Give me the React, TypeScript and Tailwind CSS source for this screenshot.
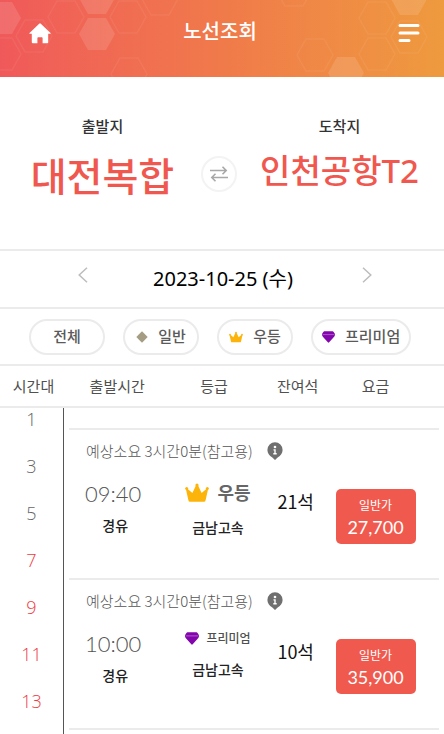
import React from "react";

type Grade = "deluxe" | "premium";

interface Bus {
  time: string;
  grade: Grade;
  company: string;
  seats: string;
  price: string;
}

const buses: Bus[] = [
  { time: "09:40", grade: "deluxe", company: "금남고속", seats: "21석", price: "27,700" },
  { time: "10:00", grade: "premium", company: "금남고속", seats: "10석", price: "35,900" },
];

const hours = [1, 3, 5, 7, 9, 11, 13];

function Crown({ className }: { className: string }) {
  return (
    <svg viewBox="0 0 24 19" className={className} fill="#fdb40a" aria-hidden="true">
      <path d="M3.400 17.200 1 6.500l1.400-.7 5 4.200L10.900 2.500h2.200L16.600 10l5-4.200 1.400.7-2.400 10.700q-.3 1.500-1.600 1.500H5q-1.300 0-1.600-1.500Z" />
      <circle cx="12" cy="2" r="1.600" />
      <circle cx="1.700" cy="5.600" r="1.500" />
      <circle cx="22.300" cy="5.600" r="1.500" />
    </svg>
  );
}

function Gem({ className }: { className: string }) {
  return (
    <svg viewBox="0 0 14 13" className={className} aria-hidden="true">
      <path d="M2.400.3h9.200q.5 0 .8.400L13.700 2.800q.5.900.200 1.900-.2.800-.8 1.500L7.700 12.300q-.7.700-1.400 0L.9 6.200Q.3 5.500.1 4.700-.2 3.700.3 2.800L1.600.7q.3-.4.8-.4Z" fill="#8206ac" />
      <path d="M.6 3.900h12.800" stroke="#b765d4" strokeWidth=".9" />
    </svg>
  );
}

function InfoPin() {
  return (
    <svg viewBox="0 0 16 18" className="h-[18px] w-4" aria-hidden="true">
      <path d="M8 .3a7.600 7.600 0 0 0-7.600 7.600c0 3.400 2.100 5.700 4.600 7.300.9.600 1.500 1.200 2.100 2.100q.9 1 1.800 0c.6-.9 1.200-1.500 2.100-2.100 2.500-1.600 4.600-3.900 4.600-7.300A7.600 7.600 0 0 0 8 .3Z" fill="#6f6f6f" />
      <circle cx="8" cy="5" r="1.300" fill="#fff" />
      <path d="M6.500 7.900H8v3.600M6.300 11.800h3.400" stroke="#fff" strokeWidth="1.400" fill="none" />
    </svg>
  );
}

function Honeycomb() {
  const hex = "M-18 0-9-16H9L18 0 9 16H-9Z";
  return (
    <svg
      viewBox="0 0 444 77"
      preserveAspectRatio="xMidYMid slice"
      className="absolute inset-0 h-full w-full"
      aria-hidden="true"
    >
      <g fill="#fff" fillOpacity=".12">
        <path d={hex} transform="translate(3 18)" />
        <path d={hex} transform="translate(97 34)" />
        <path d={hex} transform="translate(97 -2)" />
        <path d={hex} transform="translate(346 73)" />
        <path d={hex} transform="translate(409 -1)" />
      </g>
      <g fill="none" stroke="#fff" strokeOpacity=".06" strokeWidth="1.500">
        <path d={hex} transform="translate(3 54)" />
        <path d={hex} transform="translate(34 36)" />
        <path d={hex} transform="translate(66 17)" />
        <path d={hex} transform="translate(128 17)" />
        <path d={hex} transform="translate(160 -1)" />
        <path d={hex} transform="translate(129 74)" />
        <path d={hex} transform="translate(294 -10)" />
        <path d={hex} transform="translate(315 55)" />
        <path d={hex} transform="translate(377 18)" />
        <path d={hex} transform="translate(377 54)" />
        <path d={hex} transform="translate(409 37)" />
      </g>
    </svg>
  );
}

function Station({ label, name, size }: { label: string; name: string; size: string }) {
  return (
    <div className="flex flex-col items-center pl-1">
      <span className="text-[15px] leading-6 font-medium text-[#333]">{label}</span>
      <button type="button" className={`mt-3 whitespace-nowrap font-medium text-[#f0584f] ${size}`}>
        {name}
      </button>
    </div>
  );
}

function Chip({ label, icon }: { label: string; icon?: React.ReactNode }) {
  return (
    <button
      type="button"
      className="flex h-9 min-w-[76px] items-center justify-center gap-[10px] rounded-full border-2 border-[#ebebeb] px-[9px] text-[15px] font-medium whitespace-nowrap text-[#5a5a5a]"
    >
      {icon}
      {label}
    </button>
  );
}

function GradeLabel({ grade }: { grade: Grade }) {
  return grade === "deluxe" ? (
    <div className="flex h-9 items-center justify-center gap-2 text-[18px] font-bold text-[#666]">
      <Crown className="h-[19px] w-6" />
      우등
    </div>
  ) : (
    <div className="flex h-7 items-center justify-center gap-[7px] text-[12px] font-medium text-[#505050]">
      <Gem className="h-[13px] w-[14px]" />
      프리미엄
    </div>
  );
}

function BusRows({ bus }: { bus: Bus }) {
  return (
    <>
      <tr>
        <td colSpan={5} className="px-[5px]">
          <div className="flex h-[46px] items-center gap-[14px] border-t-2 border-[#ebebeb] pb-[2px] pl-[17px] text-[15px] font-light whitespace-nowrap text-[#555]">
            예상소요 3시간0분(참고용)
            <button type="button" aria-label="안내">
              <InfoPin />
            </button>
          </div>
        </td>
      </tr>
      <tr className="h-[104px] text-center align-top">
        <td className="pt-px pr-1">
          <div className="pr-1 font-[Lato] text-[22px] leading-[38px] font-light text-[#555]">{bus.time}</div>
          <div className="text-[14px] leading-6 font-medium text-[#222]">경유</div>
        </td>
        <td className="pl-1">
          <GradeLabel grade={bus.grade} />
          <div className="mt-[5px] text-[14px] leading-6 font-medium text-[#222]">{bus.company}</div>
        </td>
        <td className="pt-[13px] pr-1 text-[18px] leading-7 text-[#111]">{bus.seats}</td>
        <td className="pt-[15px]">
          <button
            type="button"
            className="mx-auto flex h-[55px] w-20 flex-col items-center justify-center rounded-[5px] bg-[#f05a4e] text-white"
          >
            <span className="text-[12px] leading-5">일반가</span>
            <span className="font-[Lato] text-[18px] leading-6">{bus.price}</span>
          </button>
        </td>
        <td />
      </tr>
    </>
  );
}

export default function App() {
  return (
    <div className="flex h-screen flex-col overflow-hidden bg-white font-['Noto_Sans_CJK_KR',sans-serif]">
      <header className="relative shrink-0 bg-linear-to-r from-[#f0595a] via-[#f07a4a] to-[#ee9a3e]">
        <Honeycomb />
        <div className="relative flex h-[77px] items-start justify-between px-6 pt-4">
          <button type="button" aria-label="홈" className="flex h-[34px] w-8 items-center justify-center">
            <svg viewBox="0 0 22 21" className="h-[21px] w-[22px]" fill="#fff" aria-hidden="true">
              <path d="M10.200.7q.8-.7 1.600 0l9.700 9.200q.6.8-.4.900H19.200v8.400q0 1-1 1h-4.600v-5.200q0-.7-.7-.7h-3.800q-.7 0-.7.700v5.200H3.800q-1 0-1-1v-8.400H.9q-1-.1-.4-.9Z" />
            </svg>
          </button>
          <h1 className="text-[20px] leading-[30px] font-medium text-white">노선조회</h1>
          <button type="button" aria-label="메뉴" className="flex h-[34px] w-9 items-center justify-end">
            <svg viewBox="0 0 22 20" className="h-5 w-[22px]" stroke="#fff" strokeWidth="3" strokeLinecap="round" aria-hidden="true">
              <path d="M2 2.500h18M2 10h18M2 17.500h9" />
            </svg>
          </button>
        </div>
      </header>

      <section className="grid h-[172px] shrink-0 grid-cols-[1fr_auto_1fr] pt-[37px] pr-[6px]">
        <Station label="출발지" name="대전복합" size="text-[39px] leading-[48px]" />
        <button
          type="button"
          aria-label="출발지 도착지 바꾸기"
          className="mt-[42px] flex h-9 w-9 items-center justify-center rounded-full border-2 border-[#f3f3f3]"
        >
          <svg viewBox="0 0 18 16" className="h-4 w-[18px]" fill="none" stroke="#a8a8a8" strokeWidth="1.600" aria-hidden="true">
            <path d="M0 4.500h16M12.500.8l3.700 3.700-3.700 3.700M18 11.500H2M5.500 7.800l-3.700 3.700 3.700 3.700" />
          </svg>
        </button>
        <Station label="도착지" name="인천공항T2" size="font-['Noto_Sans','Noto_Sans_CJK_KR',sans-serif] text-[33px] leading-[42px]" />
      </section>

      <nav className="flex h-[58px] shrink-0 items-center justify-between border-t-2 border-[#ebebeb] pr-[67px] pl-[73px]">
        <button type="button" aria-label="이전 날짜" className="mb-2 flex h-6 w-5 items-center justify-center">
          <svg viewBox="0 0 10 16" className="h-4 w-[10px]" fill="none" stroke="#bdbdbd" strokeWidth="1.500" aria-hidden="true">
            <path d="M9 .8 1.200 8 9 15.200" />
          </svg>
        </button>
        <span className="pr-1 font-['Noto_Sans','Noto_Sans_CJK_KR',sans-serif] text-[20px] leading-8 whitespace-nowrap text-black">
          2023-10-25 (수)
        </span>
        <button type="button" aria-label="다음 날짜" className="mb-2 flex h-6 w-5 items-center justify-center">
          <svg viewBox="0 0 10 16" className="h-4 w-[10px]" fill="none" stroke="#bdbdbd" strokeWidth="1.500" aria-hidden="true">
            <path d="M1 .8 8.800 8 1 15.200" />
          </svg>
        </button>
      </nav>

      <div className="flex h-[57px] shrink-0 items-center gap-[18px] border-t-2 border-[#ebebeb] pl-[29px]">
        <Chip label="전체" />
        <Chip
          label="일반"
          icon={
            <svg viewBox="0 0 12 12" className="h-3 w-3" aria-hidden="true">
              <path d="M6 .3 11.700 6 6 11.700.3 6Z" fill="#a59d83" />
            </svg>
          }
        />
        <Chip label="우등" icon={<Crown className="h-3 w-[14px]" />} />
        <Chip label="프리미엄" icon={<Gem className="h-3 w-[13px]" />} />
      </div>

      <main className="flex min-h-0 flex-1">
        <div className="flex w-16 shrink-0 flex-col">
          <h2 className="flex h-11 shrink-0 items-center justify-center border-y-2 border-[#ebebeb] pl-[3px] text-[15px] whitespace-nowrap text-[#505050]">
            시간대
          </h2>
          <ul className="flex flex-1 flex-col gap-[27px] border-r border-[#555] pt-px text-center font-['Open_Sans'] text-[18px] leading-5 font-light">
            {hours.map((h) => (
              <li key={h}>
                <button type="button" className={h < 7 ? "text-[#666]" : "text-[#ee3b42]"}>
                  {h}
                </button>
              </li>
            ))}
          </ul>
        </div>
        <div className="min-w-0 flex-1">
          <table className="w-full table-fixed border-separate border-spacing-0">
            <thead>
              <tr className="h-11 text-[15px] whitespace-nowrap text-[#505050] *:border-y-2 *:border-[#ebebeb]">
                <th className="w-[28%] font-normal">출발시간</th>
                <th className="w-[24%] pr-1 font-normal">등급</th>
                <th className="w-[19%] font-normal">잔여석</th>
                <th className="w-[22%] font-normal">요금</th>
                <td className="w-[7%]" />
              </tr>
            </thead>
            <tbody>
              <tr className="h-5">
                <td colSpan={5} />
              </tr>
              {buses.map((bus) => (
                <BusRows key={bus.time} bus={bus} />
              ))}
              <tr>
                <td colSpan={5} className="px-[5px]">
                  <div className="border-t-2 border-[#ebebeb]" />
                </td>
              </tr>
            </tbody>
          </table>
        </div>
      </main>
    </div>
  );
}
